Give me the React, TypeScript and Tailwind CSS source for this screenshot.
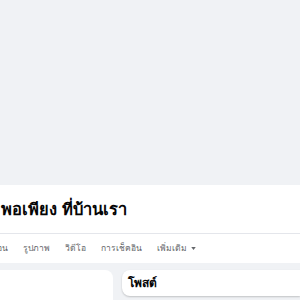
const tabs = ['เพื่อน', 'รูปภาพ', 'วิดีโอ', 'การเช็คอิน'];

export default function App() {
  return (
    <div className="h-[300px] w-[300px] overflow-hidden bg-[#f0f2f5] font-['Liberation_Sans',sans-serif]">
      {/* Cover */}
      <div className="h-[185px] bg-[#f0f2f5]" />

      {/* Header */}
      <div className="bg-white">
        <div className="flex h-[48px] items-center pl-[1px]">
          <h1 className="whitespace-nowrap text-[16.5px] font-bold text-[#050505]">พอเพียง ที่บ้านเรา</h1>
        </div>
        <div className="h-px bg-[#e4e6eb]" />
        <div className="flex h-[29px] items-center gap-[15px] -ml-[12px] whitespace-nowrap text-[8.5px] text-[#65676b]">
          {tabs.map((t) => (
            <span key={t}>{t}</span>
          ))}
          <span className="flex items-center gap-[4px]">
            เพิ่มเติม
            <svg width="5" height="3" viewBox="0 0 6 4">
              <path d="M0 0h6L3 4z" fill="#65676b" />
            </svg>
          </span>
        </div>
      </div>

      {/* Body */}
      <div className="flex gap-[9px] pt-[7px]">
        <div className="h-[40px] w-[113px] shrink-0 rounded-tr-lg bg-white" />
        <div className="flex-1">
          <div className="flex h-[26px] items-center rounded-l-lg bg-white px-[6px] shadow-[0_1px_2px_rgba(0,0,0,0.2)]">
            <span className="text-[12px] font-bold text-[#050505]">โพสต์</span>
          </div>
        </div>
      </div>
    </div>
  );
}
